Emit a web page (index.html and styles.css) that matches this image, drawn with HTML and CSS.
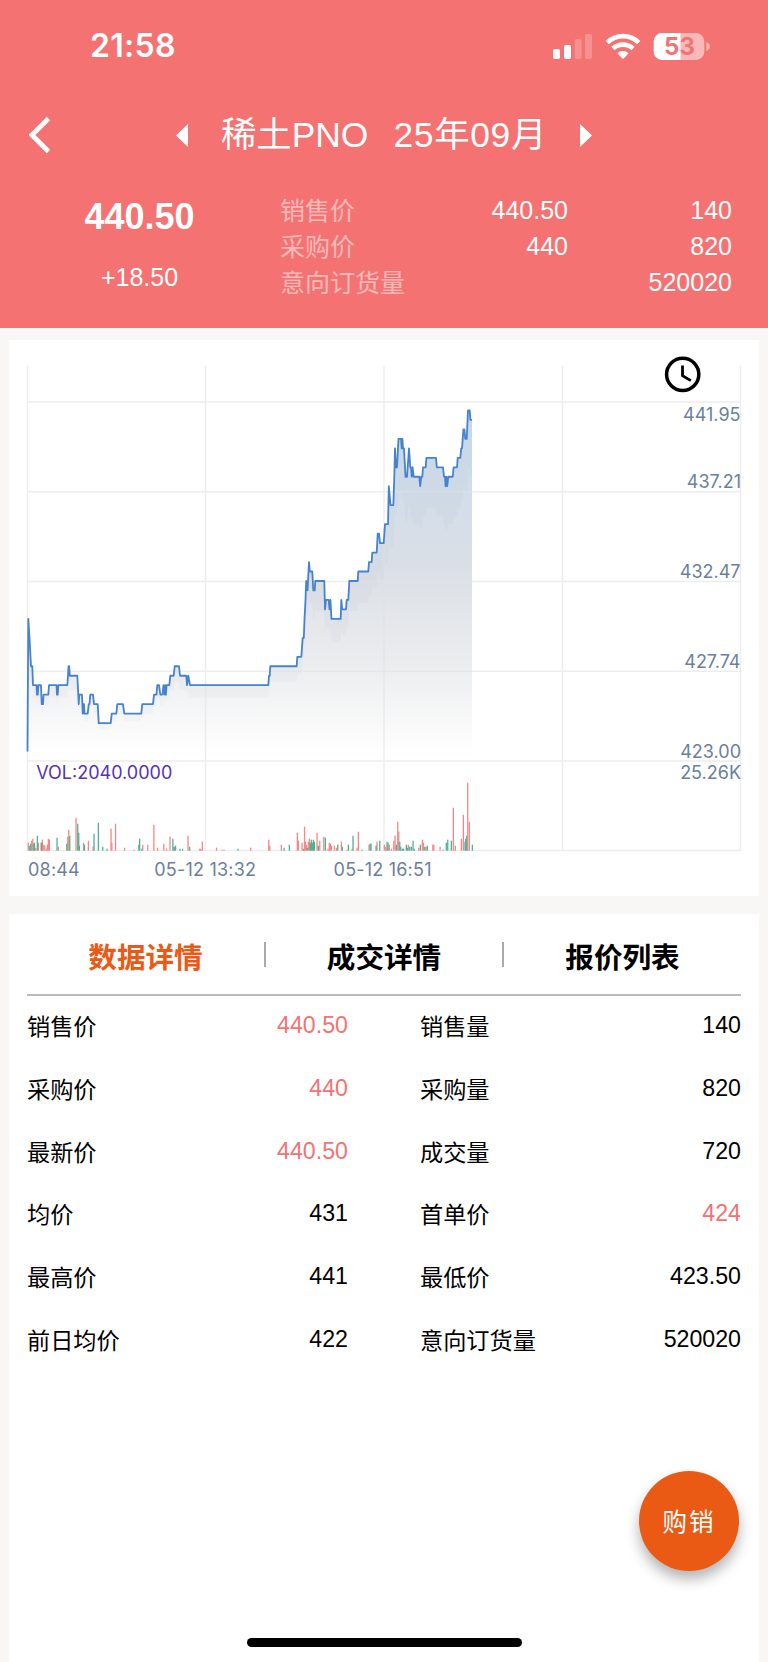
FILE: index.html
```html
<!DOCTYPE html>
<html lang="zh-CN">
<head>
    <meta charset="UTF-8">
    <meta name="viewport" content="width=device-width, initial-scale=1.0">
    <title>稀土PNO 25年09月</title>
    <link rel="stylesheet" href="styles.css">
</head>
<body>
    <header class="header">
        <div class="status-bar">
            <span class="time">21:58</span>
            <svg class="status-icons" width="158" height="30" viewBox="552 30 158 30">
                <g fill="#fff">
                    <rect x="553" y="48" width="7" height="10" rx="2"/>
                    <rect x="564" y="44" width="7" height="14" rx="2"/>
                    <rect x="574.7" y="38" width="7" height="20" rx="2" opacity=".22"/>
                    <rect x="585" y="33" width="7" height="25" rx="2" opacity=".22"/>
                </g>
                <g fill="none" stroke="#fff" stroke-width="4.8">
                    <path d="M607.3 41.6a22.5 22.5 0 0 1 31.4 0"/>
                    <path d="M613 47.6a14.6 14.6 0 0 1 20 0"/>
                </g>
                <path d="M617.4 52.2a8.2 8.2 0 0 1 11.2 0l-4.4 4.7q-1.2 1-2.4 0z" fill="#fff"/>
                <path d="M680.7 32H662a8.3 8.3 0 0 0-8.3 8.3v10.4A8.3 8.3 0 0 0 662 59h18.7z" fill="#fff"/>
                <path d="M680.7 32H696a8.3 8.3 0 0 1 8.3 8.3v10.4A8.3 8.3 0 0 1 696 59h-15.3z" fill="#fff" opacity=".5"/>
                <path d="M706.3 41q3.5 1.3 3.500 4.500t-3.500 4.500z" fill="#fff" opacity=".5"/>
                <text class="battery-text" x="679.5" y="54" text-anchor="middle">53</text>
            </svg>
        </div>

        <nav class="title-bar">
            <svg class="back" width="22" height="38" viewBox="0 0 22 38">
                <path d="M19.500 2.500L3 19l16.500 16.500" fill="none" stroke="#fff" stroke-width="4.800"/>
            </svg>
            <div class="title">
                <svg width="12" height="23" viewBox="0 0 12 23"><path d="M12 0v23L0 11.500z" fill="#fff"/></svg>
                <h1><span>稀土PNO</span><span class="month">25年09月</span></h1>
                <svg width="12" height="23" viewBox="0 0 12 23"><path d="M0 0v23l12-11.500z" fill="#fff"/></svg>
            </div>
        </nav>

        <section class="quote">
            <div class="latest">
                <strong>440.50</strong>
                <span>+18.50</span>
            </div>
            <div class="quote-grid">
                <label>销售价</label><span>440.50</span><span>140</span>
                <label>采购价</label><span>440</span><span>820</span>
                <label>意向订货量</label><span></span><span>520020</span>
            </div>
        </section>
    </header>

    <main>
        <section class="card chart-card">
            <svg class="chart" width="750" height="556" viewBox="9 340 750 556">
                <defs>
                    <linearGradient id="areaFill" gradientUnits="userSpaceOnUse" x1="0" y1="410" x2="0" y2="757">
                        <stop offset="0" stop-color="#cbdbed"/>
                        <stop offset=".45" stop-color="#dadfe6"/>
                        <stop offset=".72" stop-color="#ebecee"/>
                        <stop offset="1" stop-color="#fff"/>
                    </linearGradient>
                </defs>
                <polygon id="area" fill="url(#areaFill)"/>
                <polygon id="shade" fill="#62798f" opacity=".035"/>
                <path class="grid" d="M27.5 366V851M205.5 366V851M384 366V851M562.5 366V851M740.5 366V851M27 402H741M27 491.7H741M27 581.5H741M27 671.3H741M27 761H741M27 850.5H741"/>
                <g id="volume"></g>
                <polyline id="price" fill="none" stroke="#4583d1" stroke-width="1.8" stroke-linejoin="round"/>
                <g class="axis" text-anchor="end">
                    <text x="740.5" y="420.5">441.95</text>
                    <text x="741" y="488">437.21</text>
                    <text x="740.5" y="578">432.47</text>
                    <text x="740.5" y="668">427.74</text>
                    <text x="741" y="757.5">423.00</text>
                    <text x="741" y="779">25.26K</text>
                </g>
                <g class="axis time-axis">
                    <text x="28" y="875.7">08:44</text>
                    <text x="154.3" y="875.7">05-12 13:32</text>
                    <text x="333.6" y="875.7">05-12 16:51</text>
                </g>
                <text class="axis vol" x="36.3" y="778.7">VOL:2040.0000</text>
                <g fill="none" stroke="#000">
                    <circle cx="682.7" cy="374.4" r="16.1" stroke-width="3.5"/>
                    <path d="M682.5 365.5v10.3l8.3 4.8" stroke-width="2.8"/>
                </g>
            </svg>
        </section>

        <section class="card detail-card">
            <div class="tabs">
                <a class="tab active">数据详情</a>
                <a class="tab">成交详情</a>
                <a class="tab">报价列表</a>
            </div>
            <div class="details">
                <dl><dt>销售价</dt><dd class="red">440.50</dd></dl>
                <dl><dt>销售量</dt><dd>140</dd></dl>
                <dl><dt>采购价</dt><dd class="red">440</dd></dl>
                <dl><dt>采购量</dt><dd>820</dd></dl>
                <dl><dt>最新价</dt><dd class="red">440.50</dd></dl>
                <dl><dt>成交量</dt><dd>720</dd></dl>
                <dl><dt>均价</dt><dd>431</dd></dl>
                <dl><dt>首单价</dt><dd class="red">424</dd></dl>
                <dl><dt>最高价</dt><dd>441</dd></dl>
                <dl><dt>最低价</dt><dd>423.50</dd></dl>
                <dl><dt>前日均价</dt><dd>422</dd></dl>
                <dl><dt>意向订货量</dt><dd>520020</dd></dl>
            </div>
        </section>
    </main>

    <button class="trade-btn" type="button">购销</button>
    <div class="home-bar"></div>

    <script src="chart.js"></script>
</body>
</html>
```

FILE: styles.css
```css
* {
    box-sizing: border-box;
}

body {
    margin: 0;
    height: 1662px;
    display: flex;
    flex-direction: column;
    overflow: hidden;
    background-color: #f8f7f5;
    color: #000;
    font-family: "Liberation Sans", "Noto Sans CJK SC", sans-serif;
}

svg {
    display: block;
}

.header {
    height: 328px;
    flex: none;
    background-color: #f47272;
    color: #fff;
}

.status-bar {
    height: 92px;
    padding: 0 58px 0 90px;
    display: flex;
    justify-content: space-between;
    align-items: center;
}

.time {
    font: 600 32px/40px Inter, sans-serif;
    letter-spacing: 0.3px;
}

.battery-text {
    font: 700 24px Inter, sans-serif;
    fill: #f47272;
}

.title-bar {
    height: 86px;
    display: grid;
    grid-template-columns: 60px 1fr 60px;
    align-items: center;
}

.back {
    margin-left: 29px;
}

.title {
    display: flex;
    justify-content: center;
    align-items: center;
    gap: 33px;
}

.title h1 {
    margin: 0;
    display: flex;
    gap: 25px;
    font-size: 35.4px;
    font-weight: 400;
    line-height: 50px;
}

.title .month {
    letter-spacing: 0.7px;
}

.quote {
    display: flex;
    padding: 15px 36px 0 0;
}

.latest {
    width: 279px;
    display: flex;
    flex-direction: column;
    align-items: center;
    padding-top: 3px;
}

.latest strong {
    font-size: 36px;
    line-height: 42px;
}

.latest span {
    margin-top: 23px;
    font-size: 25px;
    line-height: 32px;
}

.quote-grid {
    flex: 1;
    display: grid;
    grid-template-columns: 152px 136px 1fr;
    grid-auto-rows: 36px;
    padding-left: 1px;
    font-size: 25px;
    line-height: 35px;
    text-align: right;
}

.quote-grid label {
    padding-top: 1px;
    text-align: left;
    opacity: 0.5;
}

main {
    flex: 1;
    display: flex;
    flex-direction: column;
    gap: 18px;
    padding: 12px 9px 0;
}

.card {
    background-color: #fff;
}

.chart-card {
    height: 556px;
}

.grid {
    fill: none;
    stroke: #dfe1e6;
    stroke-opacity: 0.6;
    stroke-width: 1.4;
}

.axis {
    font-family: Inter, sans-serif;
    font-size: 18px;
    fill: #6b7f9c;
}

.time-axis {
    letter-spacing: 0.2px;
}

.vol {
    fill: #5632b5;
}

.detail-card {
    flex: 1;
    padding: 0 18px;
}

.tabs {
    height: 82px;
    display: grid;
    grid-template-columns: 237px 238px 239px;
    align-items: center;
    border-bottom: 2px solid #bcbcbc;
}

.tab {
    height: 25px;
    padding-top: 4px;
    line-height: 25px;
    font-size: 28.6px;
    font-weight: 700;
    text-align: center;
}

.tab + .tab {
    border-left: 2px solid #aaa;
}

.tab.active {
    color: #eb5a14;
}

.details {
    display: grid;
    grid-template-columns: 321px 321px;
    grid-auto-rows: 62.8px;
    justify-content: space-between;
    font-size: 23.2px;
}

.details dl {
    margin: 0;
    display: flex;
    justify-content: space-between;
    line-height: 58px;
}

.details dt {
    padding-top: 2px;
}

.details dd {
    margin: 0;
}

.red {
    color: #f47272;
}

/* floats over the detail card */
.trade-btn {
    position: absolute;
    left: 639px;
    top: 1471px;
    width: 100px;
    height: 100px;
    padding: 0 0 2px;
    border: none;
    border-radius: 50%;
    background-color: #eb5a14;
    color: #fff;
    font: 24.5px "Noto Sans CJK SC", sans-serif;
    letter-spacing: 2px;
    box-shadow: 0 8px 14px rgba(0, 0, 0, 0.3);
}

.home-bar {
    position: absolute;
    left: 247px;
    top: 1638px;
    width: 275px;
    height: 9px;
    border-radius: 5px;
    background-color: #000;
}
```

FILE: chart.js
```javascript
// [x, price]
const prices = [
    [27.5,423.5],[28.3,430.5],[29.5,429.5],[31,428],[32.3,428],[33,427],[36.5,427],[37,426.5],[37.8,426.5],[38.3,427],
    [41,427],[41.7,426],[43,426],[43.5,426.5],[48.3,426.5],[49,427],[56.5,427],[57,426.5],[57.7,426.5],[58.3,427],
    [67.3,427],[68,427.5],[68.5,428],[69.2,428],[69.8,427.5],[77.3,427.5],[78.3,426.5],[78.7,426],[79.3,426.5],[82,426.5],
    [82.7,425.5],[83.3,426],[84,426],[84.5,425.5],[87.7,425.5],[88.7,426],[89.5,426],[90.3,426.5],[93,426.5],[94,426],
    [97.7,426],[98.7,425],[110.7,425],[111.7,425.5],[116.3,425.5],[117.3,426],[123,426],[124.3,425.5],[141.3,425.5],[142.3,426],
    [153,426],[154,426.5],[156.5,426.5],[157.3,427],[159,427],[160.3,426.5],[162.5,426.5],[163.5,427],[164.7,426.5],[165.3,427],
    [165.9,426.5],[166.6,427],[169.3,427],[170.3,427.5],[173.7,427.5],[174.7,428],[179,428],[180,427.5],[186.3,427.5],[187,427],
    [188.3,427.5],[190,427],[268.3,427],[269,427.5],[269.7,427.5],[270.3,428],[296.7,428],[297.3,428.5],[301.3,428.5],[302.7,429.5],
    [303.8,429.5],[304.5,430.5],[305.5,431.5],[306.2,432.5],[307.5,432],[309,433.5],[309.8,433],[312.3,433],[313.3,432],[314.7,432],
    [315.3,432.5],[324.3,432.5],[325,431],[326,431.5],[328.7,431.5],[329.5,431],[330.4,431.5],[331.5,430.5],[340.7,430.5],[341.3,431.5],
    [342.2,431],[346,431],[346.7,431.5],[348.3,431.5],[349.3,432.5],[357.7,432.5],[358.3,433],[368.3,433],[369,433.5],[371.7,433.5],
    [372.3,434],[376.7,434],[377.7,435],[379,435],[380,434.5],[383.7,434.5],[385,435.5],[388,435.5],[388.8,437.5],[390.5,436.5],
    [393.3,436.5],[394.3,438],[395,439.5],[395.9,438.5],[397,438.5],[398.5,440],[401,440],[401.7,439.5],[402.4,440],[403,439.5],
    [404,439.5],[405.5,438],[407,438],[409,439.5],[410.3,438.5],[411,438.5],[411.8,438],[412.6,438.5],[413.7,438],[419.3,438],
    [420.2,437.5],[421.3,438],[422.3,438],[423,438.5],[425.7,438.5],[426.4,439],[436,439],[436.8,438.5],[443,438.5],[444,438],
    [445,438],[445.6,437.5],[446.3,438],[447.2,437.5],[448.3,438],[452.7,438],[453.6,438.5],[457,438.5],[457.7,439],[460.3,439],
    [461.2,439.5],[462,439.5],[462.7,440],[463.4,440.5],[464.4,440.5],[465.3,440],[466.7,440],[468,441.5],[469.7,441.5],[470.4,441],[472,441]
];

// x, height; red bars
const up = [
    28.3,8, 31.7,10, 32.7,12, 35.7,3, 38.3,8, 41,8, 42.3,11, 43.7,6, 44.7,5, 46.3,2, 47.3,6, 48.3,12, 49.3,11, 58.3,4,
    67.7,14, 68.7,21, 76,33, 83.5,8, 88.3,10, 93,4, 111,22, 111.8,8, 115.5,27, 124.5,3, 134,1, 142.7,6, 147.7,6, 153.8,26,
    157.5,3, 163.7,7, 166.5,2, 170,14, 174.7,4, 188,15, 199.7,2, 200.8,2, 202.3,9, 216.5,3, 222,1, 224,1, 250.7,3,
    268.7,11, 269.7,5, 281.3,6, 297.3,18, 298.3,10, 302,8, 304.5,24, 305.3,9, 306.3,6, 308.3,9, 309.3,12, 317,18, 319.7,10,
    323.7,14, 328,2, 329.3,8, 330.3,7, 331.3,5, 334.3,5, 336.3,3, 341.3,9, 346.7,1, 352,2, 357,3, 358.3,19, 369,6, 377,9,
    384.3,6, 385.7,4, 389.3,6, 391.3,2, 393.7,10, 395,15, 397.7,29, 398.7,19, 408.3,6, 418.7,3, 422.3,11, 423.3,8, 426,4,
    432.7,6, 433.8,6, 440,4, 453.3,43, 455.3,5, 461.3,12, 463.3,36, 467.7,68, 469.3,29
];

// x, height; green bars
const down = [
    29.7,5, 30.7,7, 33.7,7, 34.4,8, 37.3,15, 41.6,8, 57,13, 66.7,7, 69.7,15, 77.7,27, 78.7,18, 79.3,5, 84.4,6, 94,17,
    98.3,28, 102.7,4, 107,2, 138.8,6, 139.6,12, 141.7,2, 172.8,12, 173.8,4, 175.5,5, 180,2, 182.5,2, 189.7,4, 238,2,
    284,3, 289.3,6, 303.3,2, 307.3,3, 310.3,8, 311.3,11, 312.3,8, 313.3,11, 314.3,9, 318.3,5, 325.3,13, 337.7,6, 342.3,4,
    348.3,6, 353,15, 362,1, 370,7, 371,7, 376,5, 379.7,10, 387,9, 388,8, 396.3,6, 399.7,9, 400.7,4, 402.3,2, 403.5,2,
    406.3,6, 407.3,3, 409.7,4, 411.3,4, 413,10, 414.3,2, 420.3,6, 424.7,4, 427.3,5, 443,1, 446.3,8, 447.7,11, 451.3,10,
    465,9, 465.7,12, 466.7,15, 472.3,6
];

const bottom = 761;
const points = prices.map(([x, price]) => [x, bottom - (price - 423) * 18.95]);
const line = points.map(p => p.join(',')).join(' ');

document.getElementById('price').setAttribute('points', line);
document.getElementById('area').setAttribute('points', `${line} 472,${bottom} 27.5,${bottom}`);

// soft darker band right under the line
const lower = points.map(([x, y]) => [x, y + (bottom - y) / 6].join(',')).reverse().join(' ');
document.getElementById('shade').setAttribute('points', `${line} ${lower}`);

function drawBars(data, color) {
    const volume = document.getElementById('volume');
    for (let i = 0; i < data.length; i += 2) {
        const bar = document.createElementNS('http://www.w3.org/2000/svg', 'rect');
        bar.setAttribute('x', data[i] - 0.6);
        bar.setAttribute('y', 850.7 - data[i + 1]);
        bar.setAttribute('width', 1.3);
        bar.setAttribute('height', data[i + 1]);
        bar.setAttribute('fill', color);
        volume.appendChild(bar);
    }
}

drawBars(up, '#fb8585');
drawBars(down, '#4fb296');
```
